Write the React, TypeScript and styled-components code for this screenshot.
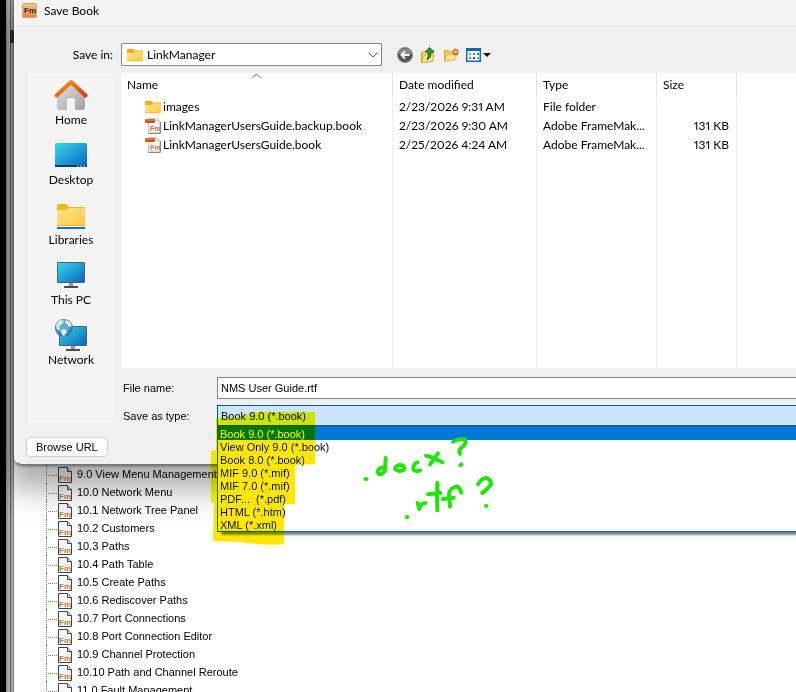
import React from "react";
import styled, { createGlobalStyle } from "styled-components";

const uiFont = 'Lato, "Open Sans", sans-serif';
const classicFont = '"Liberation Sans", Arial, sans-serif';

const GlobalStyle = createGlobalStyle`
  *, *::before, *::after { box-sizing: border-box; }
  body { margin: 0; background: #fff; color: #000; font: 12px/16px ${uiFont}; font-variant-numeric: proportional-nums; }
  button, input, select { font: inherit; color: inherit; }
`;

const Page = styled.div`
  position: relative;
  display: flex;
  height: 100vh;
  overflow: hidden;
`;

const DesktopEdge = styled.div`
  flex: none;
  width: 14px;
  padding: 30px 0 0 10px;
  background: linear-gradient(90deg, #000 6px, #8a8a8a 6px, #a9a9ad 8px, #b2b2b6 10px, #5a5a5a 10px, #5a5a5a 11px, #a0a0a0 11px, #aaa 13px, #808080 13px);
`;

const EdgeMark = styled.div`
  height: 13px;
  background: #303030;
`;

const Workspace = styled.main`
  flex: 1;
  min-width: 0;
  display: flex;
  flex-direction: column;
`;

const Dialog = styled.section`
  position: relative;
  z-index: 1;
  flex: none;
  background: #f0f0f0;
  border-left: 1px solid #fff;
  border-bottom: 1px solid #777;
  border-bottom-left-radius: 8px;
  box-shadow: 0 1px 3px rgba(0, 0, 0, 0.45), 0 16px 32px 8px rgba(0, 0, 0, 0.34);
`;

const TitleBar = styled.header`
  display: flex;
  align-items: center;
  gap: 6px;
  height: 28px;
  padding: 0 7px 6px;
  background: #f3f3f3;
  border-bottom: 1px solid #fff;
  box-shadow: inset 0 -1px #e3e3e3;
`;

const Title = styled.h1`
  margin: 0;
  font-size: 12px;
  font-weight: 400;
`;

const DialogBody = styled.div`
  display: grid;
  grid-template-columns: 87px minmax(0, 1fr);
  column-gap: 6px;
  padding: 15px 0 11px 13px;
`;

const SaveInLabel = styled.label`
  padding: 4px 2px 0 0;
  text-align: right;
`;

const LocationBar = styled.div`
  display: flex;
  align-items: center;
  gap: 15px;
  height: 30px;
  padding-bottom: 7px;
`;

const LocationBox = styled.div`
  display: flex;
  align-items: center;
  width: 261px;
  height: 23px;
  padding: 0 3px 0 5px;
  background: #fff;
  border: 1px solid #868686;
  border-radius: 1px;
`;

const LocationSelect = styled.select`
  flex: 1;
  min-width: 0;
  height: 20px;
  padding: 0 4px;
  appearance: none;
  border: 0;
  outline: 0;
  background: transparent;
`;

const Tools = styled.div`
  display: flex;
  gap: 7px;
`;

const ToolButton = styled.button`
  display: flex;
  padding: 0;
  border: 0;
  background: transparent;
`;

const Places = styled.nav`
  display: flex;
  flex-direction: column;
  height: 350px;
  padding-top: 5px;
  background: #f4f4f4;
`;

const Place = styled.button`
  display: flex;
  flex-direction: column;
  align-items: center;
  height: 60px;
  padding: 0 1px 0 0;
  border: 0;
  background: transparent;
`;

const Content = styled.div`
  min-width: 0;
`;

const FilePane = styled.div`
  height: 295px;
  background: #fff;
`;

const FileTable = styled.table`
  width: 100%;
  height: 100%;
  table-layout: fixed;
  border-collapse: separate;
  border-spacing: 0;
  font-variant-numeric: proportional-nums;
`;

const HeadCell = styled.th<{ $width?: number }>`
  position: relative;
  width: ${(p) => (p.$width ? `${p.$width}px` : "auto")};
  height: 24px;
  padding: 0 6px;
  font-weight: 400;
  text-align: left;
  & + & { border-left: 1px solid #e2e2e2; }
`;

const SortMark = styled.svg`
  position: absolute;
  top: 0;
  left: 0;
  right: 0;
  margin: 0 auto;
`;

const Cell = styled.td<{ $end?: boolean }>`
  height: 19px;
  padding: 0 7px 0 6px;
  overflow: hidden;
  white-space: nowrap;
  text-align: ${(p) => (p.$end ? "right" : "left")};
  & + & { border-left: 1px solid #e6f1fc; }
`;

const FillerCell = styled.td`
  & + & { border-left: 1px solid #e6f1fc; }
`;

const FileName = styled.span`
  display: flex;
  align-items: center;
  gap: 2px;
  padding-left: 18px;
`;

const Form = styled.div`
  display: grid;
  grid-template-columns: 94px minmax(0, 1fr);
  row-gap: 6px;
  padding: 9px 0 0 2px;
  align-items: center;
  font-family: ${classicFont};
`;

const NameInput = styled.input`
  width: 100%;
  height: 22px;
  padding: 0 3px;
  font-size: 11px;
  border: 1px solid #868686;
  border-right: 0;
  border-radius: 1px 0 0 1px;
  outline: 0;
`;

const FormLabel = styled.label`
  font-size: 11px;
`;

const TypeField = styled.div`
  position: relative;
  font-size: 11px;
`;

const TypeSelect = styled.select`
  display: block;
  width: 100%;
  height: 21px;
  padding: 0 3px;
  appearance: none;
  background: #cce4f7;
  border: 1px solid #005a9e;
  border-right: 0;
  border-radius: 0;
  outline: 0;
`;

const TypeList = styled.ul`
  position: absolute;
  top: 100%;
  left: 0;
  right: 0;
  margin: 0;
  padding: 0;
  list-style: none;
  background: #fff;
  border: 1px solid #0f6cbd;
  border-right: 0;
  box-shadow: 4px 3px 2px rgba(0, 0, 0, 0.5);
`;

const TypeOption = styled.li<{ $selected: boolean }>`
  padding: 2px 0 0 2px;
  line-height: 11px;
  white-space: pre;
  color: ${(p) => (p.$selected ? "#fff" : "#000")};
  background: ${(p) => (p.$selected ? "#0078d7" : "transparent")};
`;

const DialogFooter = styled.footer`
  padding: 0 0 7px 11px;
`;

const BrowseButton = styled.button`
  display: block;
  height: 20px;
  padding: 0 9px;
  font: 11px/16px ${classicFont};
  background: #fdfdfd;
  border: 1px solid #d0d0d0;
  border-radius: 4px;
`;

const Tree = styled.ul`
  margin: 0;
  padding: 0 0 0 32px;
  list-style: none;
  font: 11px/18px ${classicFont};
`;

const TreeItem = styled.li`
  display: flex;
  align-items: center;
  height: 18px;
  border-left: 1px dotted #808080;
  white-space: nowrap;
`;

const Branch = styled.span`
  width: 9px;
  margin: 2px 1px 0 1px;
  border-top: 1px dotted #808080;
`;

const TreeIcon = styled.svg`
  margin: 2px 5px 0 0;
`;

const Highlight = styled.svg`
  position: absolute;
  z-index: 2;
  left: 200px;
  top: 400px;
  mix-blend-mode: darken;
  pointer-events: none;
`;

const Handwriting = styled.svg`
  position: absolute;
  z-index: 3;
  left: 350px;
  top: 420px;
  pointer-events: none;
`;

const FolderIcon = () => (
  <svg width="16" height="14" viewBox="0 0 16 14" aria-hidden="true">
    <defs>
      <linearGradient id="folder" x1="0" y1="0" x2="1" y2="1">
        <stop offset="0" stopColor="#ffe596" />
        <stop offset="1" stopColor="#ffc93a" />
      </linearGradient>
    </defs>
    <path d="M0 2Q0 .7 1.2.7H6L8 2.5H15Q16 2.5 16 3.5V8H0Z" fill="#f2ad0c" />
    <path d="M0 5H6L8 3.2H15Q16 3.2 16 4.2V12Q16 13 15 13H1Q0 13 0 12Z" fill="url(#folder)" />
    <path d="M.5 12.8H15.5" stroke="#eeb62d" strokeWidth=".8" />
  </svg>
);

const BookIcon = () => (
  <svg width="16" height="16" viewBox="0 0 16 16" aria-hidden="true">
    <path d="M3.5.5H11.5L15.5 4V15.5H3.5Z" fill="#f2f2f2" stroke="#c5c5c5" />
    <path d="M15.3 4V15.3H3.5" fill="none" stroke="#777" />
    <path d="M11.5.5V4H15.5Z" fill="#d0d0d0" />
    <rect x="0" y="1" width="10" height="4" rx="1" fill="#b85c22" />
    <path d="M1 2H9" stroke="#e79a5d" />
    <text x="5" y="13" fontFamily="Liberation Sans, sans-serif" fontSize="7" fontWeight="700" fill="#d2763b">Fm</text>
  </svg>
);

const AppIcon = () => (
  <svg width="16" height="16" viewBox="0 0 16 16" aria-hidden="true">
    <defs>
      <linearGradient id="app" x1="0" y1="0" x2="0" y2="1">
        <stop offset="0" stopColor="#f5c796" />
        <stop offset="1" stopColor="#dd8340" />
      </linearGradient>
    </defs>
    <rect x=".5" y=".5" width="14" height="14" rx="1" fill="url(#app)" stroke="#d7a06c" />
    <text x="2" y="10" fontFamily="Liberation Sans, sans-serif" fontSize="8" fontWeight="700" fill="#3b1e0c">Fm</text>
  </svg>
);

const ScreenGradient = ({ id }: { id: string }) => (
  <defs>
    <linearGradient id={id} x1="0" y1="0" x2="1" y2="1">
      <stop offset="0" stopColor="#35dce6" />
      <stop offset=".5" stopColor="#1f9fd6" />
      <stop offset="1" stopColor="#0b63bd" />
    </linearGradient>
  </defs>
);

const HomeIcon = () => (
  <svg width="34" height="34" viewBox="0 0 34 34" aria-hidden="true">
    <defs>
      <linearGradient id="wall" x1="0" y1="0" x2="1" y2="1">
        <stop offset="0" stopColor="#e2e2e2" />
        <stop offset="1" stopColor="#a2a2a2" />
      </linearGradient>
      <linearGradient id="roof" x1="0" y1="0" x2="1" y2="1">
        <stop offset="0" stopColor="#f99a10" />
        <stop offset="1" stopColor="#d33d0c" />
      </linearGradient>
    </defs>
    <path d="M3 16 17 4 31 16V29Q31 32 28 32H21V22Q21 20 19 20H15Q13 20 13 22V32H6Q3 32 3 29Z" fill="url(#wall)" />
    <path d="M2.5 17.5 17 4 31.5 17.5" fill="none" stroke="url(#roof)" strokeWidth="4" strokeLinecap="round" strokeLinejoin="round" />
  </svg>
);

const DesktopIcon = () => (
  <svg width="34" height="34" viewBox="0 0 34 34" aria-hidden="true">
    <ScreenGradient id="desktopScreen" />
    <rect x="1" y="5" width="32" height="24" rx="1.5" fill="url(#desktopScreen)" />
    <path d="M1 27H33V28Q33 29 32 29H2Q1 29 1 28Z" fill="#0b3c61" />
    <path d="M23 28H25M26 28H28M29 28H31" stroke="#c8dfef" />
  </svg>
);

const LibrariesIcon = () => (
  <svg width="34" height="34" viewBox="0 0 34 34" aria-hidden="true">
    <path d="M3 8Q3 6 5 6H12L15 9H31V18H3Z" fill="#f8b51b" />
    <path d="M3 13Q3 12 4 12H12L15 10H30Q31 10 31 11V27H3Z" fill="url(#folder)" />
    <path d="M3 27H31V28H3Z" fill="#f6b324" />
    <path d="M3 29H31V30Q31 31 30 31H4Q3 31 3 30Z" fill="#0874c5" />
  </svg>
);

const MonitorIcon = () => (
  <svg width="34" height="34" viewBox="0 0 34 34" aria-hidden="true">
    <ScreenGradient id="pcScreen" />
    <rect x="3.5" y="4.5" width="27" height="20" rx=".5" fill="url(#pcScreen)" stroke="#56606c" />
    <path d="M15 25H19V28H15Z" fill="#9298a0" />
    <path d="M10 28H24V30H10Z" fill="#454d59" />
  </svg>
);

const NetworkIcon = () => (
  <svg width="34" height="34" viewBox="0 0 34 34" aria-hidden="true">
    <ScreenGradient id="netScreen" />
    <rect x="5.5" y="8.5" width="27" height="19" rx=".5" fill="url(#netScreen)" stroke="#56606c" />
    <path d="M17 28H21V31H17Z" fill="#9298a0" />
    <path d="M12 31H26V33H12Z" fill="#454d59" />
    <circle cx="10" cy="10" r="9" fill="#3180b0" />
    <circle cx="9" cy="8" r="7" fill="#65abd0" />
    <path d="M2 7 6 2 10 3 8 6 5 8 6 11 3 12ZM12 2 16 4 18 8 15 9 13 6 11 5ZM7 12 11 11 13 14 10 18 8 17Z" fill="#dcecf1" />
  </svg>
);

const BackIcon = () => (
  <svg width="16" height="16" viewBox="0 0 16 16" aria-hidden="true">
    <circle cx="8" cy="8" r="7.5" fill="#555" stroke="#888" />
    <path d="M1.5 7Q2 1.5 8 1.5T14.5 7Z" fill="#8a8a8a" />
    <path d="M12.5 8H4.5M8 4.5 4.5 8 8 11.5" fill="none" stroke="#fff" strokeWidth="2" />
  </svg>
);

const UpIcon = () => (
  <svg width="16" height="16" viewBox="0 0 16 16" aria-hidden="true">
    <path d="M1.5 5.5 6 4 7 6 13 5V14L4 15.5H1.5Z" fill="#f5d35c" stroke="#c99b2c" />
    <path d="M4 8 13 7V14L2 15.5Z" fill="#ffeb94" stroke="#d6ab3d" strokeWidth=".7" />
    <path d="M5.5 5 9.5.5 14 5H11Q12 10 7 13 9 9 8 5Z" fill="#28a428" stroke="#126c16" />
  </svg>
);

const NewFolderIcon = () => (
  <svg width="16" height="16" viewBox="0 0 16 16" aria-hidden="true">
    <path d="M1.5 3.5H5L7 5H12V12L1.5 14Z" fill="#f6cf62" stroke="#d5a02d" />
    <path d="M1.5 14 4 7.5H14L12 12.5Z" fill="#ffeaa0" stroke="#dfb448" />
    <path d="M12.5 1.5V8.5M9 5H16M10 2.5 15 7.5M15 2.5 10 7.5" stroke="#e4531d" strokeWidth="1.2" />
    <circle cx="12.5" cy="5" r="1.4" fill="#ffd29d" />
  </svg>
);

const ViewIcon = () => (
  <svg width="25" height="16" viewBox="0 0 25 16" aria-hidden="true">
    <rect x=".75" y="1.75" width="13.5" height="12.5" fill="#fff" stroke="#0868c9" strokeWidth="1.5" />
    <path d="M0 1H15V4H0Z" fill="#0868c9" />
    <path d="M3 6h2v2H3z" fill="#8295b2" />
    <path d="M3 10h2v2H3z" fill="#e75b35" />
    <path d="M7 6h2v2H7z" fill="#3c77cc" />
    <path d="M11 6h2v2h-2z" fill="#1a9c3b" />
    <path d="M7 10h2v2H7z" fill="#244b9b" />
    <path d="M11 10h2v2h-2z" fill="#8295b2" />
    <path d="M17 6H25L21 10Z" fill="#111" />
  </svg>
);

const DocumentIcon = () => (
  <TreeIcon width="14" height="16" viewBox="0 0 14 16" aria-hidden="true">
    <path d="M.5.5H9.5L13.5 4.5V15.5H.5Z" fill="#f7f7f7" stroke="#444" />
    <path d="M9.5.5V4.5H13.5" fill="#ddd" stroke="#444" />
    <text x="1" y="14" fontFamily="Liberation Sans, sans-serif" fontSize="8" fontWeight="700" fill="#cb7434">Fm</text>
  </TreeIcon>
);

const places = [
  { name: "Home", Icon: HomeIcon },
  { name: "Desktop", Icon: DesktopIcon },
  { name: "Libraries", Icon: LibrariesIcon },
  { name: "This PC", Icon: MonitorIcon },
  { name: "Network", Icon: NetworkIcon },
];

const tools = [
  { name: "Back", Icon: BackIcon },
  { name: "Up one level", Icon: UpIcon },
  { name: "New folder", Icon: NewFolderIcon },
  { name: "View", Icon: ViewIcon },
];

const files = [
  { name: "images", date: "2/23/2026 9:31 AM", type: "File folder", size: "", Icon: FolderIcon },
  { name: "LinkManagerUsersGuide.backup.book", date: "2/23/2026 9:30 AM", type: "Adobe FrameMak...", size: "131 KB", Icon: BookIcon },
  { name: "LinkManagerUsersGuide.book", date: "2/25/2026 4:24 AM", type: "Adobe FrameMak...", size: "131 KB", Icon: BookIcon },
];

const types = [
  "Book 9.0 (*.book)",
  "View Only 9.0 (*.book)",
  "Book 8.0 (*.book)",
  "MIF 9.0 (*.mif)",
  "MIF 7.0 (*.mif)",
  "PDF...  (*.pdf)",
  "HTML (*.htm)",
  "XML (*.xml)",
];

const chapters = [
  "9.0 View Menu Management",
  "10.0 Network Menu",
  "10.1 Network Tree Panel",
  "10.2 Customers",
  "10.3 Paths",
  "10.4 Path Table",
  "10.5 Create Paths",
  "10.6 Rediscover Paths",
  "10.7 Port Connections",
  "10.8 Port Connection Editor",
  "10.9 Channel Protection",
  "10.10 Path and Channel Reroute",
  "11.0 Fault Management",
];

export default function App() {
  return (
    <Page>
      <GlobalStyle />
      <DesktopEdge><EdgeMark /></DesktopEdge>
      <Workspace>
        <Dialog role="dialog" aria-labelledby="dialog-title">
          <TitleBar>
            <AppIcon />
            <Title id="dialog-title">Save Book</Title>
          </TitleBar>
          <DialogBody>
            <SaveInLabel htmlFor="save-in">Save in:</SaveInLabel>
            <LocationBar>
              <LocationBox>
                <FolderIcon />
                <LocationSelect id="save-in">
                  <option>LinkManager</option>
                </LocationSelect>
                <svg width="10" height="6" viewBox="0 0 10 6" aria-hidden="true">
                  <path d="M1 1 5 5 9 1" fill="none" stroke="#555" />
                </svg>
              </LocationBox>
              <Tools>
                {tools.map(({ name, Icon }) => (
                  <ToolButton key={name} type="button" aria-label={name}><Icon /></ToolButton>
                ))}
              </Tools>
            </LocationBar>
            <Places>
              {places.map(({ name, Icon }) => (
                <Place key={name} type="button"><Icon />{name}</Place>
              ))}
            </Places>
            <Content>
              <FilePane>
                <FileTable>
                  <thead>
                    <tr>
                      <HeadCell $width={271}>
                        Name
                        <SortMark width="9" height="6" viewBox="0 0 9 6" aria-hidden="true">
                          <path d="M.5 5 4.5 1 8.5 5" fill="none" stroke="#666" />
                        </SortMark>
                      </HeadCell>
                      <HeadCell $width={144}>Date modified</HeadCell>
                      <HeadCell $width={120}>Type</HeadCell>
                      <HeadCell $width={80}>Size</HeadCell>
                      <HeadCell />
                    </tr>
                  </thead>
                  <tbody>
                    {files.map(({ name, date, type, size, Icon }) => (
                      <tr key={name}>
                        <Cell><FileName><Icon />{name}</FileName></Cell>
                        <Cell>{date}</Cell>
                        <Cell>{type}</Cell>
                        <Cell $end>{size}</Cell>
                        <Cell />
                      </tr>
                    ))}
                    <tr>
                      <FillerCell /><FillerCell /><FillerCell /><FillerCell /><FillerCell />
                    </tr>
                  </tbody>
                </FileTable>
              </FilePane>
              <Form>
                <FormLabel htmlFor="file-name">File name:</FormLabel>
                <NameInput id="file-name" defaultValue="NMS User Guide.rtf" />
                <FormLabel htmlFor="file-type">Save as type:</FormLabel>
                <TypeField>
                  <TypeSelect id="file-type" defaultValue={types[0]}>
                    {types.map((t) => <option key={t}>{t}</option>)}
                  </TypeSelect>
                  <TypeList role="listbox" aria-label="Save as type">
                    {types.map((t, i) => (
                      <TypeOption key={t} role="option" aria-selected={i === 0} $selected={i === 0}>{t}</TypeOption>
                    ))}
                  </TypeList>
                </TypeField>
              </Form>
            </Content>
          </DialogBody>
          <DialogFooter>
            <BrowseButton type="button">Browse URL</BrowseButton>
          </DialogFooter>
        </Dialog>
        <Tree>
          {chapters.map((chapter) => (
            <TreeItem key={chapter}>
              <Branch />
              <DocumentIcon />
              {chapter}
            </TreeItem>
          ))}
        </Tree>
      </Workspace>
      <Highlight width="130" height="150" viewBox="0 0 130 150" aria-hidden="true">
        <path d="M16 18 37 17 56 12H115V64L95 65V104H84V144Q64 146 40 142L13 141 14 103 11 102V51L16 50Z" fill="#ffe600" />
      </Highlight>
      <Handwriting width="160" height="120" viewBox="0 0 480 360" fill="none" stroke="#22e60a" strokeWidth="12" strokeLinecap="round" strokeLinejoin="round" aria-hidden="true">
        <path d="M46 177H49M170 291H172M331 136 334 133M408 258H409" />
        <path d="M107 114 105 150Q100 163 88 163 79 157 87 147 98 139 105 147" />
        <path d="M149 135Q135 138 136 148 146 157 161 149 167 136 149 135Z" />
        <path d="M203 127Q189 130 190 148 196 158 210 151" />
        <path d="M228 107Q247 110 277 127M264 100 240 134" />
        <path d="M309 65Q329 54 346 60 351 71 332 85 325 91 330 101" />
        <path d="M203 249 208 267Q211 251 226 249" />
        <path d="M262 188 261 227 262 271M234 223 271 219" />
        <path d="M300 260 297 220Q300 204 320 199 330 204 334 218M278 237 311 233" />
        <path d="M384 193Q393 176 408 174 424 178 423 193 414 207 397 219" />
      </Handwriting>
    </Page>
  );
}
